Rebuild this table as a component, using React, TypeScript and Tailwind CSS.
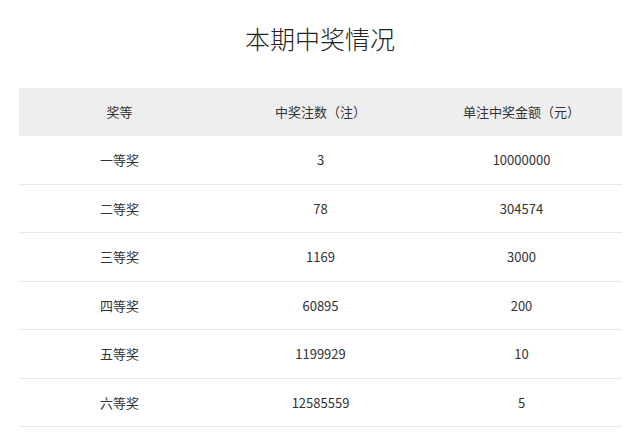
import React from "react";

const rows = [
  ["一等奖", "3", "10000000"],
  ["二等奖", "78", "304574"],
  ["三等奖", "1169", "3000"],
  ["四等奖", "60895", "200"],
  ["五等奖", "1199929", "10"],
  ["六等奖", "12585559", "5"],
];

export default function App() {
  return (
    <div
      className="w-[640px] h-[444px] bg-white text-[#333] overflow-hidden"
      style={{ fontFamily: '"Noto Sans CJK SC", "Noto Sans", sans-serif' }}
    >
      <h1 className="h-[88px] pt-[20px] text-center text-[25px] leading-[36px] font-light text-[#222]">
        本期中奖情况
      </h1>
      <div className="mx-[19px] w-[603px]">
        <div className="grid grid-cols-3 h-[48px] bg-[#eeeeee] items-center text-[13px] text-center">
          <div>奖等</div>
          <div>中奖注数（注）</div>
          <div>单注中奖金额（元）</div>
        </div>
        {rows.map((r) => (
          <div
            key={r[0]}
            className="grid grid-cols-3 h-[48.5px] border-b border-[#e6e6e6] items-center text-[13px] text-center"
          >
            <div>{r[0]}</div>
            <div>{r[1]}</div>
            <div>{r[2]}</div>
          </div>
        ))}
      </div>
    </div>
  );
}
